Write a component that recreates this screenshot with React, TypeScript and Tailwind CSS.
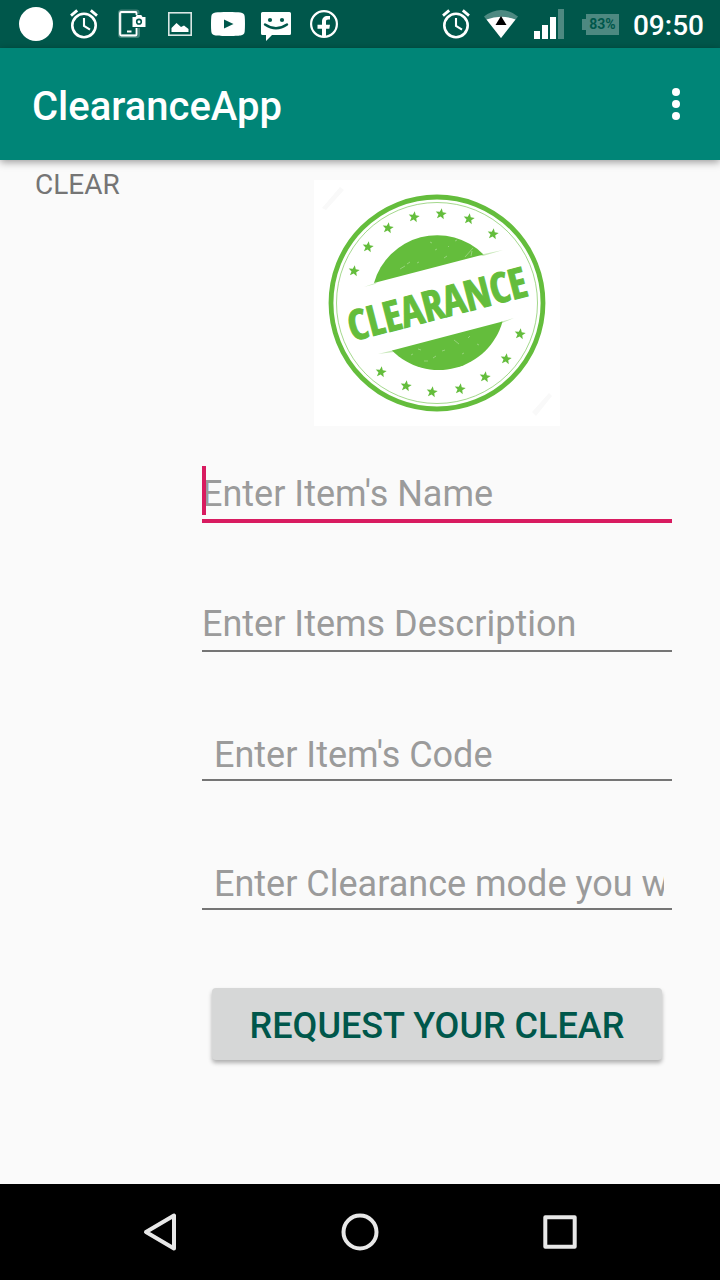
import { ReactNode } from "react";

function StatusIcon({ children, label }: { children: ReactNode; label: string }) {
  return (
    <svg viewBox="0 0 48 48" className="size-12 shrink-0" fill="none" role="img" aria-label={label}>
      {children}
    </svg>
  );
}

function AlarmIcon() {
  return (
    <StatusIcon label="Alarm">
      <circle cx="24" cy="25.5" r="11.7" stroke="white" strokeWidth="2.6" />
      <path d="M24 18v8l6 3.6" stroke="white" strokeWidth="2.1" />
      <path d="M11 15.6l6.2-5.2M37 15.6l-6.2-5.2" stroke="white" strokeWidth="2.8" />
    </StatusIcon>
  );
}

function StatusBar() {
  return (
    <div className="flex h-12 items-center bg-[#00574b] pr-4 pl-3">
      <StatusIcon label="Notification">
        <circle cx="24" cy="24" r="17" fill="white" />
      </StatusIcon>
      <AlarmIcon />
      <StatusIcon label="Screen capture">
        <path
          d="M29.5 14v-1.500q0-1-1-1H13.500q-1.500 0-1.500 1.500v21.500q0 1.500 1.500 1.500H29q1 0 1-1v-7"
          stroke="white"
          strokeOpacity="0.25"
          strokeWidth="4"
        />
        <path
          d="M28.500 15v-2q0-1-1-1H13.500q-1.500 0-1.500 1.500v20.500q0 1.500 1.500 1.500H27.500q1 0 1-1v-6.500"
          stroke="white"
          strokeWidth="1.800"
        />
        <path d="M19 31.500h4.500" stroke="white" strokeWidth="2" />
        <path d="M24.500 17h3l1.200-2h4.600l1.200 2h3v10h-13z" fill="white" />
        <circle cx="31" cy="21.700" r="2.300" stroke="#00574b" strokeWidth="1.600" />
      </StatusIcon>
      <StatusIcon label="Picture">
        <rect x="12.800" y="12.800" width="22.400" height="22.400" stroke="white" strokeOpacity="0.85" strokeWidth="1.600" />
        <path d="M15.500 32v-4l5-5 4.500 4 3-1.500 4.500 3.500v3z" fill="white" />
      </StatusIcon>
      <StatusIcon label="Video">
        <path
          d="M24 12c6 0 10 .2 12.500.5 2.500.3 4 1.500 4.200 4 .4 4 .4 11 0 15-.2 2.500-1.700 3.700-4.200 4-4 .6-21 .6-25 0-2.500-.3-4-1.500-4.200-4-.4-4-.4-11 0-15 .2-2.500 1.700-3.700 4.200-4C14 12.200 18 12 24 12z"
          fill="white"
        />
        <path d="M20 19.500v9l9.500-4.500z" fill="#00574b" />
      </StatusIcon>
      <StatusIcon label="Message">
        <path d="M10.500 12h27q1.500 0 1.500 1.500v20q0 1.500-1.500 1.500H20l-6 6v-6h-3.500Q9 35 9 33.500v-20Q9 12 10.500 12z" fill="white" />
        <circle cx="18" cy="20" r="2.100" fill="#00574b" />
        <circle cx="30" cy="20" r="2.100" fill="#00574b" />
        <path d="M13 24.500q11 7.500 22 0" stroke="#00574b" strokeWidth="2.400" strokeLinecap="round" />
      </StatusIcon>
      <StatusIcon label="Facebook">
        <circle cx="24" cy="24" r="12.900" stroke="white" strokeWidth="2.200" />
        <path
          d="M22 37v-8.300h-4.500v-4H22v-3c0-3.700 2.200-5.700 5.500-5.700h2.500v3.600h-1.800c-1.600 0-2.200.9-2.200 2.200v2.900h4l-.7 4H26V37z"
          fill="white"
        />
      </StatusIcon>
      <div className="ml-auto flex items-center">
        <AlarmIcon />
        <svg viewBox="0 0 42 48" className="h-12 w-[42px]" role="img" aria-label="Wi-Fi">
          <path d="M21 38L4 16.500Q21 3.500 38 16.500z" fill="#4d8981" />
          <path d="M21 38L6.500 19.500Q21 14 35.500 19.500z" fill="white" />
          <path d="M21 16l5.500 9H15.500z" fill="black" />
        </svg>
        <svg viewBox="0 0 54 48" className="h-12 w-[54px]" role="img" aria-label="Signal">
          <path d="M12 31h6v8h-6zM20 25h6v14h-6zM28 17h6v22h-6z" fill="white" />
          <path d="M36 9h6v30h-6z" fill="#4d8981" />
        </svg>
        <div className="flex w-12 items-center pl-[6px]">
          <span className="h-[11px] w-1 bg-[#4d8981]" />
          <span className="flex h-[21px] w-[33px] items-center justify-center bg-[#4d8981] text-[14px] leading-none font-bold text-[#00574b]">
            83%
          </span>
        </div>
        <time className="ml-[9px] pt-1 text-[28px] leading-8 font-medium text-white">09:50</time>
      </div>
    </div>
  );
}

const starCentres = [
  [40, 91], [54, 67], [74, 48], [100, 37], [127, 34], [155, 39], [179, 54],
  [67, 192], [92, 206], [118, 212], [146, 209], [171, 197], [192, 179], [206, 154],
];

function ClearanceStamp() {
  return (
    <svg viewBox="0 0 246 246" className="size-[246px] bg-white" role="img" aria-label="Clearance">
      <path d="M8 28L26 7l4 3L12 30zM218 232l17-19 3 3-16 20z" fill="#f9f9f9" />
      <g fill="none" stroke="#64bd3c">
        <circle cx="123" cy="123" r="106" strokeWidth="4.800" />
        <circle cx="123" cy="123" r="100.500" strokeWidth="0.900" strokeOpacity="0.65" />
      </g>
      <g fill="#64bd3c">
        <path d="M60 103A65.500 65.500 0 0 1 169.500 74.500z" />
        <path d="M78 170.500A66 66 0 0 0 188.500 141.500z" />
        <path d="M50 107l14-5-3 2zM165 75l24-5-20 6zM64 174l16-4v2zM186 142l14-4-12 5z" fillOpacity="0.35" />
        {starCentres.map(([x, y]) => (
          <path
            key={`${x}-${y}`}
            transform={`translate(${x} ${y}) rotate(8) scale(1.150)`}
            d="M0-5L1.300-1.700 4.800-1.500 2.100.7 3 4.100 0 2.200-3 4.100-2.100.7-4.800-1.500-1.300-1.700z"
          />
        ))}
      </g>
      <g stroke="white" strokeOpacity="0.4" strokeWidth="0.800" fill="none">
        <path d="M86 89l5-3M93 84l3-2M103 83l2-1M121 70l2-1M130 78l3-2M151 77l8-9M157 76l1-5M116 62l2 1M134 66l1 1M141 61l2-1" />
        <path d="M97 175l2-1M110 181l4 0M128 171l3-1M140 160l5 4M154 158l2-2M119 178l3-2M163 164l2 1M104 169l3 1M148 174l2-1" />
      </g>
      <text
        x="123"
        y="139"
        transform="rotate(-14.500 123 123)"
        textAnchor="middle"
        strokeWidth="1"
        className="fill-[#64bd3c] stroke-[#64bd3c] font-['Noto_Sans_ExtraCondensed','Open_Sans_Condensed','Roboto_Condensed','Liberation_Sans_Narrow','Roboto',sans-serif] text-[42px] font-bold"
      >
        CLEARANCE
      </text>
    </svg>
  );
}

type FieldProps = { label: string; inset?: boolean; active?: boolean };

function Field({ label, inset, active }: FieldProps) {
  return (
    <div className="relative">
      <input
        type="text"
        aria-label={label}
        placeholder={label}
        className={`block h-[60px] w-full bg-transparent text-[36px] text-[#212121] caret-[#d81b60] outline-none placeholder:text-[#9b9b9b] placeholder:opacity-100 ${
          active ? "border-b-4 border-[#d81b60]" : "border-b-2 border-[#757575]"
        } ${inset ? "pt-[10px] pr-2 pl-3" : "pt-[5px]"}`}
      />
      {active && <span className="absolute top-[3px] left-0 h-[49px] w-1 bg-[#d81b60]" />}
    </div>
  );
}

export default function App() {
  return (
    <div className="flex min-h-screen flex-col bg-[#fafafa] font-['Roboto',sans-serif]">
      <StatusBar />
      <header className="z-10 flex h-28 items-center justify-between bg-[#008577] pr-5 pl-8 shadow-[0_2px_8px_rgba(0,0,0,0.4)]">
        <h1 className="pt-[6px] text-[40px] leading-[48px] font-medium text-white">ClearanceApp</h1>
        <button type="button" aria-label="More options" className="flex h-12 w-12 items-center justify-center">
          <svg viewBox="0 0 48 48" className="size-12" fill="white">
            <circle cx="24" cy="12" r="4" />
            <circle cx="24" cy="24" r="4" />
            <circle cx="24" cy="36" r="4" />
          </svg>
        </button>
      </header>

      <main className="flex grow pr-12 pl-[35px]">
        <p className="w-[167px] shrink-0 pt-[9px] text-[28px] leading-8 text-[#757575]">CLEAR</p>
        <form className="flex min-w-0 grow flex-col pt-5" onSubmit={(e) => e.preventDefault()}>
          <div className="flex justify-center">
            <ClearanceStamp />
          </div>
          <div className="mt-[37px] flex flex-col gap-[69px]">
            <Field label="Enter Item's Name" active />
            <Field label="Enter Items Description" />
            <Field label="Enter Item's Code" inset />
            <Field label="Enter Clearance mode you want" inset />
          </div>
          <button
            type="submit"
            className="mx-[10px] mt-[78px] mb-8 h-[72px] rounded-[4px] bg-[#d6d7d7] pt-1 text-[36px] font-medium text-[#00574b] shadow-[0_3px_4px_rgba(0,0,0,0.3)]"
          >
            REQUEST YOUR CLEAR
          </button>
        </form>
      </main>

      <nav className="flex h-24 items-center justify-center gap-[152px] bg-black">
        <button type="button" aria-label="Back">
          <svg viewBox="0 0 48 48" className="size-12" fill="none" stroke="#e8e8e8" strokeWidth="4" strokeLinejoin="round">
            <path d="M38 7.500v33L10 24z" />
          </svg>
        </button>
        <button type="button" aria-label="Home">
          <svg viewBox="0 0 48 48" className="size-12" fill="none" stroke="#e8e8e8" strokeWidth="4">
            <circle cx="24" cy="24" r="16.500" />
          </svg>
        </button>
        <button type="button" aria-label="Recent apps">
          <svg viewBox="0 0 48 48" className="size-12" fill="none" stroke="#e8e8e8" strokeWidth="4" strokeLinejoin="round">
            <path d="M9.300 9.300h29.400v29.400H9.300z" />
          </svg>
        </button>
      </nav>
    </div>
  );
}
